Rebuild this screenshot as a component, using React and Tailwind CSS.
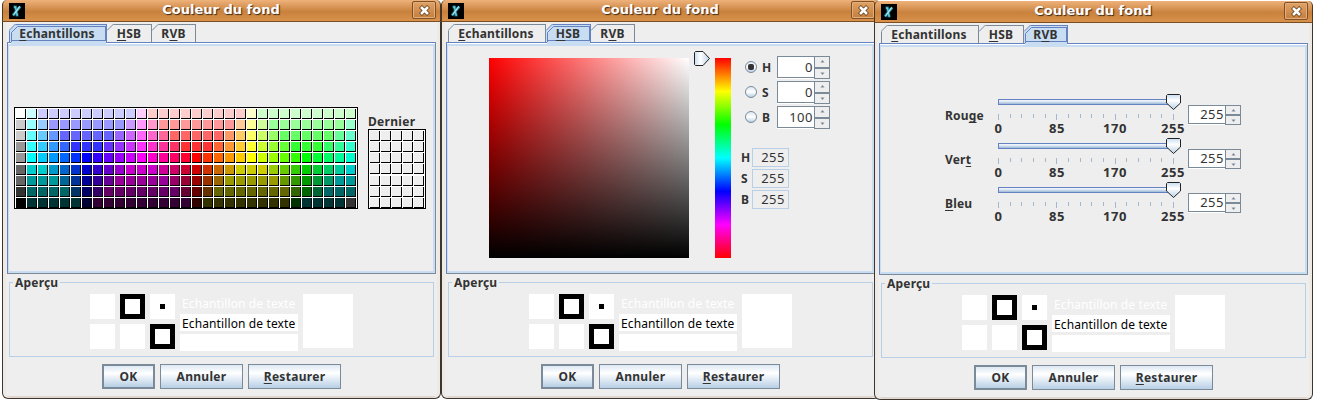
import React from "react";

const ROWS = [
  "FFF CFF CCF*9 FCF FCC*9 FFC CFC*9",
  "CCC 9FF 9CF 99F*7 C9F F9F F9C F99*7 FC9 FF9 CF9 9F9*7 9FC",
  "CCC 6FF 6CF 69F 66F*5 96F C6F F6F F6C F69 F66*5 F96 FC6 FF6 CF6 9F6 6F6*5 6F9 6FC",
  "999 3FF 3CF 39F 36F 33F*3 63F 93F C3F F3F F3C F39 F36 F33*3 F63 F93 FC3 FF3 CF3 9F3 6F3 3F3*3 3F6 3F9 3FC",
  "999 0FF 0CF 09F 06F 03F 00F 30F 60F 90F C0F F0F F0C F09 F06 F03 F00 F30 F60 F90 FC0 FF0 CF0 9F0 6F0 3F0 0F0 0F3 0F6 0F9 0FC",
  "666 0CC*2 09C 06C 03C 00C 30C 60C 90C C0C*3 C09 C06 C03 C00 C30 C60 C90 CC0*3 9C0 6C0 3C0 0C0 0C3 0C6 0C9 0CC",
  "666 099*3 069 039 009 309 609 909*5 906 903 900 930 960 990*5 690 390 090 093 096 099*2",
  "333 066*4 036 006 306 606*7 603 600 630 660*7 360 060 063 066*3",
  "000 033*5 003 303*9 300 330*8 030 033*4 333",
];
const SWATCHES = ROWS.flatMap((row) =>
  row.split(" ").flatMap((t) => {
    const [c, n] = t.split("*");
    return Array(Number(n || 1)).fill("#" + c);
  })
);

function Mnemonic({ text, at }) {
  if (at === undefined) return text;
  return (
    <>
      {text.slice(0, at)}
      <span className="underline decoration-1 underline-offset-2 [text-decoration-skip-ink:none]">{text[at]}</span>
      {text.slice(at + 1)}
    </>
  );
}

function AppIcon() {
  return (
    <svg className="ml-[7px] mt-[3px] block h-4 w-4 shrink-0" viewBox="0 0 16 16">
      <rect width="16" height="16" fill="#000" />
      <path d="M4.500 4H6.500L8 12H9.500M11.200 3.500L7.500 8L4 12.500" fill="none" stroke="#1b6f80" strokeWidth="3" />
      <path d="M5 4H6.500L8 12H9M11.200 3.500L7.500 8L4 12.300" fill="none" stroke="#6fcbd8" strokeWidth="1.300" />
      <path d="M10.500 3.500L5 11.500" fill="none" stroke="#b9f2f6" strokeWidth="1" />
    </svg>
  );
}

function TitleBar() {
  return (
    <div className="flex h-[22px] rounded-t-[5px] border-x border-b border-x-[#4a3622] border-b-[#7b4e22] bg-linear-to-b from-[#eeb27a] via-[#c9823d] via-55% to-[#d8924b]">
      <div className="-ml-px">
        <AppIcon />
      </div>
      <div className="flex-1 pl-[5px] text-center font-['DejaVu_Sans',sans-serif] text-[13px] leading-[20px] font-bold tracking-normal whitespace-nowrap text-white [text-shadow:1px_1px_1px_#3a2815]">
        Couleur du fond
      </div>
      <div className="mt-px mr-[4px] flex h-[18px] w-6 items-center justify-center rounded-[2px] border border-[#7d5026] bg-linear-to-b from-[#e0a265] to-[#c57e3c] shadow-[inset_0_0_0_1px_#e3ae7b]">
        <svg className="block h-[11px] w-[11px]" viewBox="0 0 11 11">
          <path d="M1.500 1.500l8 8M9.500 1.500l-8 8" stroke="#5c3a18" strokeWidth="4" />
          <path d="M2 2l7 7M9 2l-7 7" stroke="#fff" strokeWidth="2.600" />
        </svg>
      </div>
    </div>
  );
}

function Tab({ text, at, width, selected, first }) {
  const line = selected ? "#6382bf" : "#7a8a99";
  return (
    <div
      className={
        "relative h-[18px] border-t border-r text-center text-[12px] leading-[18px] " +
        width +
        (first ? " border-l pr-[2px]" : "") +
        (selected ? " z-10 border-[#6382bf] bg-[#c8ddf2]" : " border-[#7a8a99]")
      }
    >
      <svg className={"absolute -top-px h-[7px] w-[7px] " + (first ? "-left-px" : "left-0")} viewBox="0 0 7 7">
        <path d="M0 0h7L0 7z" fill="#eee" />
        <path d="M0 6.500L6.500 0" stroke={line} fill="none" />
      </svg>
      {selected && (
        <>
          <svg className="absolute top-px left-px h-[16px] w-[8px]" viewBox="0 0 8 16">
            <path d="M.5 16V6.500L6.500 .5H8" stroke="#6382bf" fill="none" />
          </svg>
          <div className="absolute top-px right-0 bottom-px left-[9px] border-t border-r border-[#6382bf]" />
          <div className="absolute right-0 bottom-px left-px h-px bg-[#6382bf]" />
          <div className="absolute right-0 -bottom-[3px] left-px h-[3px] bg-[#c8ddf2]" />
        </>
      )}
      <span className="relative">
        <Mnemonic text={text} at={at} />
      </span>
    </div>
  );
}

function Preview() {
  return (
    <fieldset className="mt-[1px] ml-[6px] h-[82px] w-[425px] min-w-0 border border-[#b8cfe5] pl-[80px]">
      <legend className="-ml-[77px] h-[15px] px-[2px] text-[12px] leading-[16px]">Aperçu</legend>
      <div className="mt-[4px] flex gap-[5px]">
        <div className="grid grid-cols-[25px_25px_25px] grid-rows-[25px_25px] gap-[5px]">
          <div className="bg-white" />
          <div className="border-5 border-black bg-white" />
          <div className="flex items-center justify-center bg-white">
            <div className="h-[5px] w-[5px] bg-black" />
          </div>
          <div className="bg-white" />
          <div className="bg-white" />
          <div className="border-5 border-black bg-white" />
        </div>
        <div className="flex w-[118px] flex-col gap-[3px] text-[12px] leading-[20px] font-normal tracking-[0.12px] whitespace-nowrap">
          <div className="h-[17px] pl-[2px] text-white">Echantillon de texte</div>
          <div className="h-[17px] bg-white pl-[2px] text-black">Echantillon de texte</div>
          <div className="h-[17px] bg-white" />
        </div>
        <div className="h-[54px] w-[50px] bg-white" />
      </div>
    </fieldset>
  );
}

const BTN =
  "flex h-[25px] items-center justify-center border-[#7a8a99] bg-linear-to-b from-[#dde8f3] via-white via-35% to-[#b8cfe5] text-[12px] ";

function Dialog({ active, className, children }) {
  return (
    <section className={"relative flex h-[399px] w-[439px] shrink-0 flex-col " + className}>
      <TitleBar />
      <div className="flex flex-1 flex-col rounded-b-[6px] border-x border-b border-[#3b3631] bg-[#eee] shadow-[inset_3px_0_0_#efe9e3,inset_-3px_0_0_#efe9e3,inset_0_-2px_0_#e0d6cd]">
        <div className="mt-[2px] ml-[6px] flex h-[18px]">
          <Tab first text="Echantillons" at={0} width="w-[98px]" selected={active === 0} />
          <Tab text="HSB" at={0} width="w-[45px]" selected={active === 1} />
          <Tab text="RVB" at={1} width="w-[44px]" selected={active === 2} />
        </div>
        <div className="ml-[4px] h-[232px] w-[429px] border border-t-[#6382bf] border-r-[#7a8a99] border-b-[#7a8a99] border-l-[#6382bf] shadow-[inset_0_1px_0_#fff,inset_1px_0_0_#c8ddf2,inset_-2px_-2px_0_#c8ddf2,inset_0_3px_0_#c8ddf2]">
          {children}
        </div>
        <Preview />
        <div className="mt-[7px] ml-[99px] flex gap-[5px] tracking-[0.3px]">
          <div className={BTN + "w-[53px] border-2"}>OK</div>
          <div className={BTN + "w-[83px] border"}>Annuler</div>
          <div className={BTN + "w-[93px] border"}>
            <span>
              <Mnemonic text="Restaurer" at={0} />
            </span>
          </div>
        </div>
      </div>
    </section>
  );
}

function Swatch({ color }) {
  return (
    <div
      className="h-[10px] w-[10px] border-r border-b border-black"
      style={color ? { backgroundColor: color } : { backgroundColor: "#eee" }}
    />
  );
}

function SwatchPanel() {
  return (
    <div className="flex items-end gap-[10px] pt-[64px] pl-[6px]">
      <div className="grid h-[102px] w-[344px] grid-cols-[repeat(31,10px)] gap-px border border-black bg-white pt-px pl-px">
        {SWATCHES.map((c, i) => (
          <Swatch key={i} color={c} />
        ))}
      </div>
      <div>
        <div className="h-[15px] text-[12px] leading-[15px] tracking-[0.3px]">Dernier</div>
        <div className="grid h-[80px] w-[58px] grid-cols-[repeat(5,10px)] gap-px border border-black bg-white pt-px pl-px">
          {Array.from({ length: 35 }, (_, i) => (
            <Swatch key={i} />
          ))}
        </div>
      </div>
    </div>
  );
}

function Arrow({ up }) {
  return (
    <svg className="block h-[3px] w-[5px]" viewBox="0 0 5 3">
      <path d={up ? "M2.500 0L4.500 2.500H.5z" : "M2.500 3L4.500 .5H.5z"} fill="#7a8a99" />
    </svg>
  );
}

function Spinner({ value, height }) {
  return (
    <div className={"flex w-[53px] font-normal text-[#333] " + height}>
      <div className="mb-px flex flex-1 items-center justify-end border-t border-b border-l border-[#7a8a99] bg-white pr-px text-[13px] leading-none tracking-[0.5px] shadow-[0_1px_0_#fff]">
        {value}
      </div>
      <div className="flex w-4 flex-col">
        <div className="flex flex-1 items-center justify-center border border-[#7a8a99]">
          <Arrow up />
        </div>
        <div className="flex flex-1 items-center justify-center border border-[#7a8a99]">
          <Arrow />
        </div>
      </div>
    </div>
  );
}

function Radio({ on }) {
  return (
    <div className="mb-px flex h-3 w-3 items-center justify-center rounded-full border border-[#7a8a99] bg-linear-to-b from-[#dde8f3] via-white to-[#b8cfe5]">
      {on && <div className="h-[6px] w-[6px] rounded-[2px] bg-[#333]" />}
    </div>
  );
}

function HsbPanel() {
  return (
    <div className="flex">
      <div className="mt-[15px] ml-[42px] h-[200px] w-[200px] bg-[linear-gradient(to_bottom,transparent,#000),linear-gradient(to_right,#f00,#fff)]" />
      <svg className="mt-[8px] ml-[5px] block h-[15px] w-[16px]" viewBox="0 0 16 15">
        <defs>
          <linearGradient id="hueThumb">
            <stop offset="0" stopColor="#c8ddf2" />
            <stop offset=".4" stopColor="#fff" />
            <stop offset="1" stopColor="#b8cfe5" />
          </linearGradient>
        </defs>
        <path d="M.5 1.500L1.500 .5H9L15.500 7.500L9 14.500H1.500L.5 13.500Z" fill="url(#hueThumb)" stroke="#222" />
      </svg>
      <div className="mt-[15px] ml-[5px] h-[200px] w-4 bg-[linear-gradient(to_bottom,#f00,#ff0_16.7%,#0f0_33.3%,#0ff_50%,#00f_66.7%,#f0f_83.3%,#f00)]" />
      <div className="mt-[13px] ml-[10px] text-[12px]">
        <div className="flex flex-col gap-[2px] pl-[4px]">
          {[["H", 0], ["S", 0], ["B", 100]].map(([k, v], i) => (
            <div key={k} className="flex h-[23px] items-center">
              <Radio on={i === 0} />
              <div className="w-[20px] pl-[5px]">{k}</div>
              <Spinner value={v} height="h-[23px]" />
            </div>
          ))}
        </div>
        <div className="mt-[19px] flex flex-col gap-[2px]">
          {["H", "S", "B"].map((k) => (
            <div key={k} className="flex h-[19px] items-center">
              <div className="w-[11px]">{k}</div>
              <div className="flex h-[19px] w-[37px] items-center justify-end border border-[#b8cfe5] pr-[3px] text-[13px] leading-none font-normal tracking-[0.5px]">
                255
              </div>
            </div>
          ))}
        </div>
      </div>
    </div>
  );
}

function Slider() {
  return (
    <div className="w-[198px]">
      <svg className="block h-[27px] w-[198px]" viewBox="0 0 198 27">
        <defs>
          <linearGradient id="track" x2="0" y2="1">
            <stop offset="0" stopColor="#fff" />
            <stop offset=".4" stopColor="#dce8f4" />
            <stop offset="1" stopColor="#91afcf" />
          </linearGradient>
          <linearGradient id="thumb" x2="0" y2="1">
            <stop offset="0" stopColor="#c8ddf2" />
            <stop offset=".4" stopColor="#fff" />
            <stop offset="1" stopColor="#b8cfe5" />
          </linearGradient>
        </defs>
        <rect x="10.500" y="5.500" width="175" height="5" fill="url(#track)" stroke="#6382bf" />
        {Array.from({ length: 16 }, (_, i) => (
          <rect
            key={i}
            x={10 + Math.round((i * 175) / 15)}
            y="20"
            width="1"
            height={i % 5 === 0 ? 6 : 4}
            fill="#a3b8cc"
          />
        ))}
        <path d="M178.500 1.500L179.500 .5H191.500L192.500 1.500V9L185.500 15.500L178.500 9Z" fill="url(#thumb)" stroke="#222" />
      </svg>
      <div className="flex h-[17px] text-center text-[13px] leading-[15px] tracking-[0.6px]">
        <span className="w-[21px] shrink-0">0</span>
        <span className="ml-[28px] w-[40px] shrink-0">85</span>
        <span className="ml-[18px] w-[40px] shrink-0">170</span>
        <span className="ml-[18px] w-[40px] shrink-0">255</span>
      </div>
    </div>
  );
}

function RgbPanel() {
  return (
    <div className="flex flex-col pt-[50px] pl-[65px] text-[12px]">
      {[["Rouge", 3], ["Vert", 3], ["Bleu", 0]].map(([k, at]) => (
        <div key={k} className="flex h-[44px]">
          <div className="mt-[14px] h-[16px] w-[43px] leading-[16px]">
            <Mnemonic text={k} at={at} />
          </div>
          <Slider />
          <div className="mt-[11px] ml-[2px]">
            <Spinner value={255} height="h-[20px]" />
          </div>
        </div>
      ))}
    </div>
  );
}

export default function App() {
  return (
    <main className="flex h-[401px] w-[1317px] overflow-hidden bg-white pl-[2px] font-['Noto_Sans','DejaVu_Sans',sans-serif] font-bold tracking-[0.2px] text-[#333]">
      <Dialog active={0} className="">
        <SwatchPanel />
      </Dialog>
      <Dialog active={1} className="">
        <HsbPanel />
      </Dialog>
      <Dialog active={2} className="mt-px -ml-[6px]">
        <RgbPanel />
      </Dialog>
    </main>
  );
}
